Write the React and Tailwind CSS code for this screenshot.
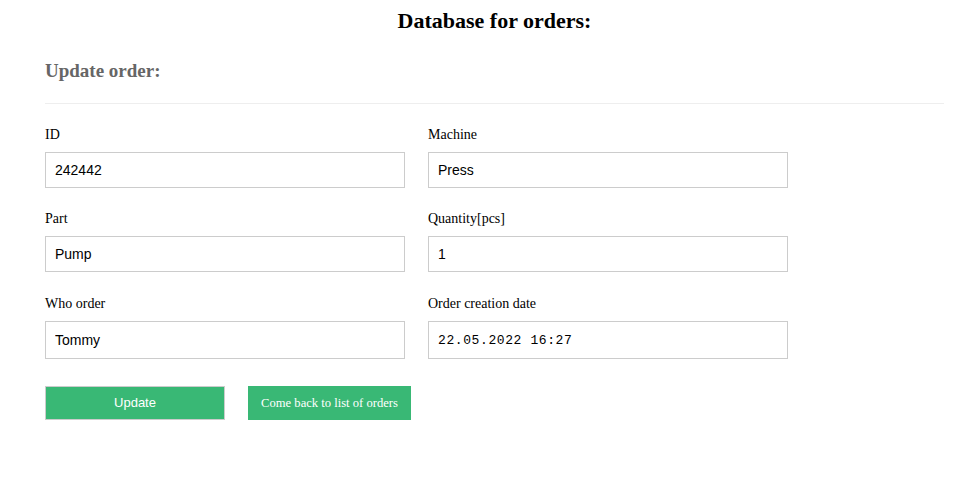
import React, { useState } from 'react';

const Field = ({ label, value, onChange, mono, tall, className = '' }) => (
    <div className={"flex flex-col w-[360px] " + className}>
        <label className="text-[14px] leading-[16px] mb-[9px] text-black">{label}</label>
        <input
            type="text"
            value={value}
            onChange={onChange}
            className={
                mono
                    ? "h-[38px] pl-[9px] pr-[10px] border border-[#ccc] text-[13px] text-black outline-none font-['Liberation_Mono',monospace] tracking-[0.6px]"
                    : (tall ? "h-[38px]" : "h-[36px]") +
                      " pl-[9px] pr-[10px] border border-[#ccc] text-[14px] text-black outline-none font-['Liberation_Sans',Arial,sans-serif]"
            }
        />
    </div>
);

const App = () => {
    const [formData, setFormData] = useState({
        id: '242442',
        machine: 'Press',
        part: 'Pump',
        quantity: '1',
        who: 'Tommy',
        date: '22.05.2022 16:27',
    });

    const handleChange = (name) => (e) => {
        setFormData({ ...formData, [name]: e.target.value });
    };

    return (
        <div className="min-h-[489px] bg-white pl-[45px] pr-[14px] font-['Liberation_Serif','Times_New_Roman',serif]">
            <h1 className="text-[22px] leading-[26px] font-bold text-center text-black pt-[8px]">Database for orders:</h1>
            <h2 className="text-[19px] leading-[22px] font-bold text-[#666] mt-[26px]">Update order:</h2>
            <hr className="border-0 border-t border-[#eee] mt-[21px]" />

            <form className="mt-[23px]" onSubmit={(e) => e.preventDefault()}>
                <div className="grid grid-cols-[360px_360px] gap-x-[23px] gap-y-[23px]">
                    <Field label="ID" value={formData.id} onChange={handleChange('id')} />
                    <Field label="Machine" value={formData.machine} onChange={handleChange('machine')} />
                    <Field label="Part" value={formData.part} onChange={handleChange('part')} />
                    <Field label="Quantity[pcs]" value={formData.quantity} onChange={handleChange('quantity')} />
                    <Field label="Who order" value={formData.who} onChange={handleChange('who')} tall className="mt-[1px]" />
                    <Field label="Order creation date" value={formData.date} onChange={handleChange('date')} mono className="mt-[1px]" />
                </div>

                <div className="flex gap-[23px] mt-[27px]">
                    <button
                        type="submit"
                        className="w-[180px] h-[34px] bg-[#39b875] border border-[#ccc] text-white text-[13px] font-['Liberation_Sans',Arial,sans-serif]"
                    >
                        Update
                    </button>
                    <button
                        type="button"
                        className="w-[163px] h-[34px] bg-[#39b875] text-white text-[12.6px]"
                    >
                        Come back to list of orders
                    </button>
                </div>
            </form>
        </div>
    );
};

export default App;
